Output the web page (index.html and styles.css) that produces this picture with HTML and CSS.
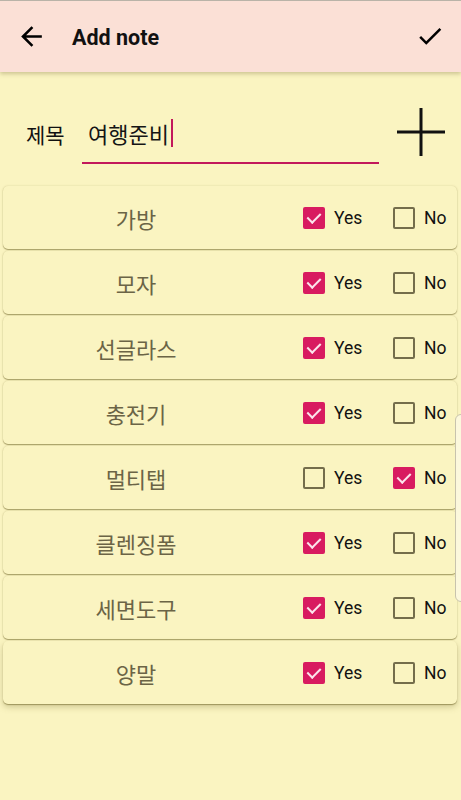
FILE: index.html
```html
<!DOCTYPE html>
<html lang="ko">
<head>
<meta charset="utf-8">
<link rel="stylesheet" href="styles.css">
</head>
<body>
<div class="app">
  <header class="topbar">
    <svg class="icon back" viewBox="0 0 24 24" width="31" height="31"><path d="M20 11H7.83l5.59-5.59L12 4l-8 8 8 8 1.41-1.41L7.83 13H20v-2z" fill="#000"/></svg>
    <h1 class="title">Add note</h1>
    <svg class="icon done" viewBox="0 0 24 24" width="30" height="30"><path d="M9 16.17L4.83 12l-1.42 1.41L9 19 21 7l-1.41-1.41z" fill="#000"/></svg>
  </header>

  <section class="titlerow">
    <span class="label">제목</span>
    <div class="field"><span class="value">여행준비</span><span class="cursor"></span></div>
    <svg class="plus" viewBox="0 0 50 50" width="50" height="50"><path d="M25 1V49M1 25H49" stroke="#111" stroke-width="3"/></svg>
  </section>

  <ul class="list">
    <li class="card"><span class="name">가방</span><span class="opt"><span class="box on"></span>Yes</span><span class="opt"><span class="box"></span>No</span></li>
    <li class="card"><span class="name">모자</span><span class="opt"><span class="box on"></span>Yes</span><span class="opt"><span class="box"></span>No</span></li>
    <li class="card"><span class="name">선글라스</span><span class="opt"><span class="box on"></span>Yes</span><span class="opt"><span class="box"></span>No</span></li>
    <li class="card"><span class="name">충전기</span><span class="opt"><span class="box on"></span>Yes</span><span class="opt"><span class="box"></span>No</span></li>
    <li class="card"><span class="name">멀티탭</span><span class="opt"><span class="box"></span>Yes</span><span class="opt"><span class="box on"></span>No</span></li>
    <li class="card"><span class="name">클렌징폼</span><span class="opt"><span class="box on"></span>Yes</span><span class="opt"><span class="box"></span>No</span></li>
    <li class="card"><span class="name">세면도구</span><span class="opt"><span class="box on"></span>Yes</span><span class="opt"><span class="box"></span>No</span></li>
    <li class="card"><span class="name">양말</span><span class="opt"><span class="box on"></span>Yes</span><span class="opt"><span class="box"></span>No</span></li>
  </ul>
  <div class="edge"></div>
</div>
</body>
</html>
```
FILE: styles.css
```css
* { box-sizing: border-box; }
html, body { margin: 0; padding: 0; }
body {
  background: #faf4c1;
  font-family: Roboto, "Noto Sans CJK KR", sans-serif;
  width: 461px;
  height: 800px;
  overflow: hidden;
}
.app { position: relative; height: 800px; }
.topbar {
  height: 72px;
  background: #fbe0d6;
  border-top: 1px solid #b9b3a8;
  display: flex;
  align-items: center;
  padding: 0 16px 0 16px;
  box-shadow: 0 2px 4px rgba(120, 110, 60, 0.35);
  position: relative;
  z-index: 1;
}
.icon { display: block; flex: none; }
.title {
  margin: 2px 0 0 25px;
  font-size: 21.5px;
  font-weight: 700;
  color: #111;
  flex: 1;
}
.done { margin-top: -1px; }

.titlerow {
  display: flex;
  align-items: center;
  height: 113px;
  padding: 18px 0 0 26px;
}
.label {
  font-family: "Noto Sans CJK KR", sans-serif;
  font-size: 21px;
  color: #111;
  width: 56px;
  margin-top: -8px;
}
.field {
  width: 297px;
  height: 44px;
  border-bottom: 2px solid #c2185b;
  display: flex;
  align-items: center;
  padding-left: 6px;
  margin-top: 8px;
}
.value {
  font-family: "Noto Sans CJK KR", sans-serif;
  font-size: 22px;
  color: #151515;
  margin-top: -15px;
}
.cursor {
  width: 2px;
  height: 28px;
  background: #c2185b;
  margin-left: 2px;
  margin-top: -15px;
}
.plus { margin-left: 17px; margin-top: -12px; }

.list {
  list-style: none;
  margin: 0;
  padding: 1px 4px 0 3px;
  display: flex;
  flex-direction: column;
  gap: 2px;
}
.card {
  height: 63px;
  background: #faf4c1;
  border-radius: 5px;
  box-shadow: 0 1px 1px rgba(120, 110, 50, 0.6), 0 0 2px rgba(150, 140, 80, 0.35);
  display: flex;
  align-items: center;
}
.card:last-child {
  box-shadow: 0 1px 1px rgba(120, 110, 50, 0.6), 0 3px 6px rgba(130, 120, 60, 0.35);
}
.name {
  width: 268px;
  text-align: center;
  font-family: "Noto Sans CJK KR", sans-serif;
  font-size: 22px;
  color: #6b6446;
  padding-right: 2px;
}
.opt {
  display: flex;
  align-items: center;
  font-size: 17.5px;
  color: #111;
  width: 90px;
  padding-left: 32px;
}
.opt + .opt { width: 96px; }
.box {
  width: 22px;
  height: 22px;
  border: 2px solid #746d4b;
  border-radius: 2px;
  margin-right: 9px;
  flex: none;
  position: relative;
}
.box.on {
  background: #d81b60;
  border-color: #d81b60;
}
.box.on::after {
  content: "";
  position: absolute;
  left: 5px;
  top: 1px;
  width: 6px;
  height: 11px;
  border-right: 2px solid #fce4ec;
  border-bottom: 2px solid #fce4ec;
  transform: rotate(45deg);
}
.edge {
  position: absolute;
  right: -6px;
  top: 414px;
  width: 12px;
  height: 188px;
  background: #fcf8dc;
  border: 1px solid #c8c3ad;
  border-radius: 6px;
}
```
